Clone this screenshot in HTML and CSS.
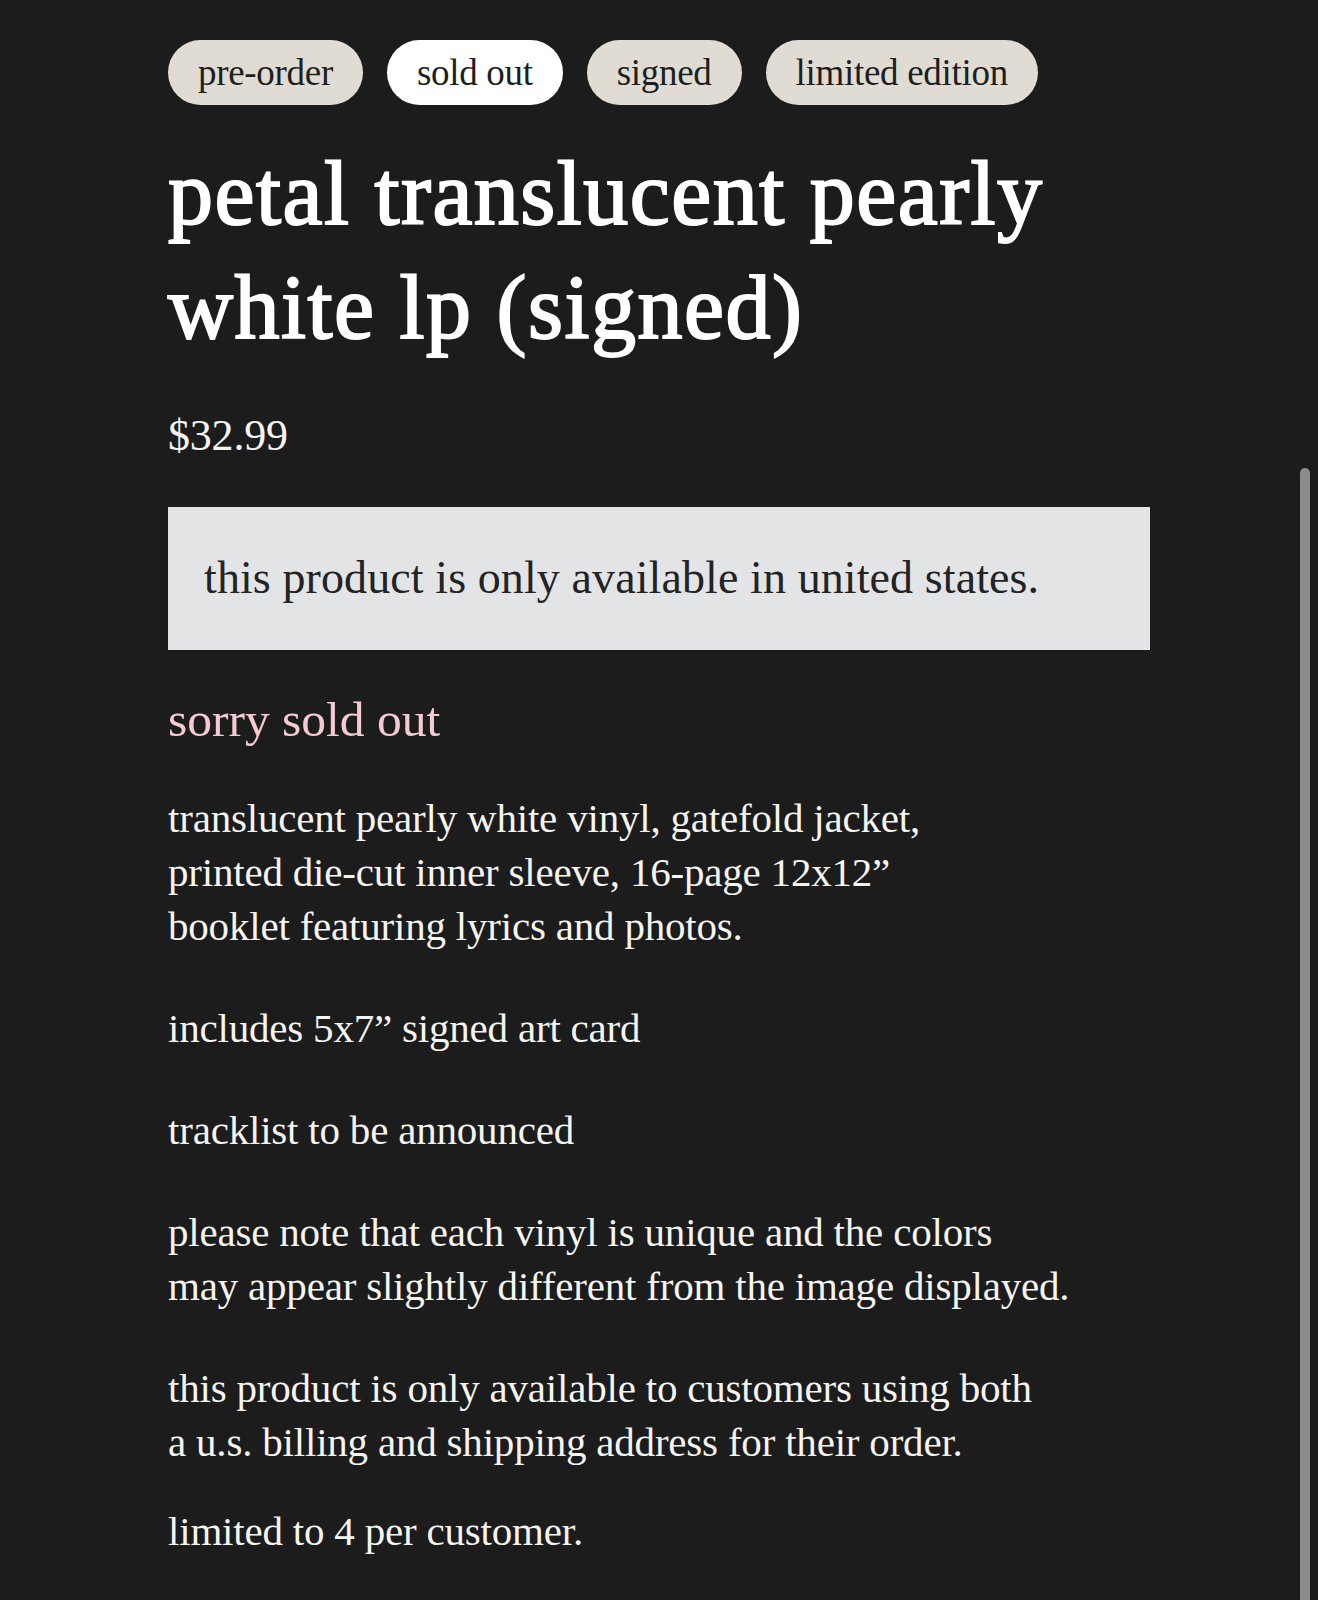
FILE: index.html
```html
<!DOCTYPE html>
<html lang="en">
<head>
    <meta charset="UTF-8">
    <title>petal translucent pearly white lp (signed)</title>
    <link rel="stylesheet" href="styles.css">
</head>
<body>
    <div class="product">
        <div class="tags">
            <span class="tag">pre-order</span>
            <span class="tag tag-white">sold out</span>
            <span class="tag">signed</span>
            <span class="tag">limited edition</span>
        </div>

        <h1 class="title">petal translucent pearly<br>white lp (signed)</h1>

        <div class="price">$32.99</div>

        <div class="notice">this product is only available in united states.</div>

        <div class="soldout">sorry sold out</div>

        <div class="desc">
            <p>translucent pearly white vinyl, gatefold jacket,<br>printed die-cut inner sleeve, 16-page 12x12”<br>booklet featuring lyrics and photos.</p>
            <p>includes 5x7” signed art card</p>
            <p>tracklist to be announced</p>
            <p>please note that each vinyl is unique and the colors<br>may appear slightly different from the image displayed.</p>
            <p>this product is only available to customers using both<br>a u.s. billing and shipping address for their order.</p>
            <p class="last">limited to 4 per customer.</p>
        </div>
    </div>

    <div class="scrollbar"></div>
</body>
</html>
```

FILE: styles.css
```css
html, body{
    margin:0;
    background:#1c1c1c;
}
body{
    font-family:"Liberation Serif", "Times New Roman", serif;
    color:#f4f4f2;
}
.product{
    padding:40px 0 0 168px;
}

.tags{
    display:flex;
    gap:24px;
}
.tag{
    height:65px;
    line-height:65px;
    padding:0 30px;
    border-radius:33px;
    background:#e0dcd3;
    color:#1e1e1e;
    font-size:37px;
    letter-spacing:-0.3px;
}
.tag-white{
    background:#fff;
}

.title{
    margin:32px 0 0;
    font-size:90px;
    line-height:114px;
    font-weight:normal;
    color:#fff;
    letter-spacing:1.5px;
    -webkit-text-stroke:2px #fff;
}

.price{
    margin-top:43px;
    font-size:44px;
    line-height:56px;
    letter-spacing:-0.2px;
}

.notice{
    margin-top:43px;
    width:910px;
    padding:42px 36px 43px;
    background:#e3e4e6;
    color:#232323;
    font-size:46px;
    line-height:58px;
    letter-spacing:0.1px;
}

.soldout{
    margin-top:40px;
    font-size:49.5px;
    line-height:60px;
    color:#f5cbd1;
}

.desc{
    margin-top:41px;
}
.desc p{
    margin:0 0 48px;
    font-size:41px;
    line-height:54px;
    letter-spacing:-0.2px;
}
.desc p.last{
    margin-top:-13px;
}

.scrollbar{
    position:fixed;
    left:1300px;
    top:468px;
    bottom:0;
    width:10px;
    border-radius:5px 5px 0 0;
    background:#8c8c8c;
}
```
